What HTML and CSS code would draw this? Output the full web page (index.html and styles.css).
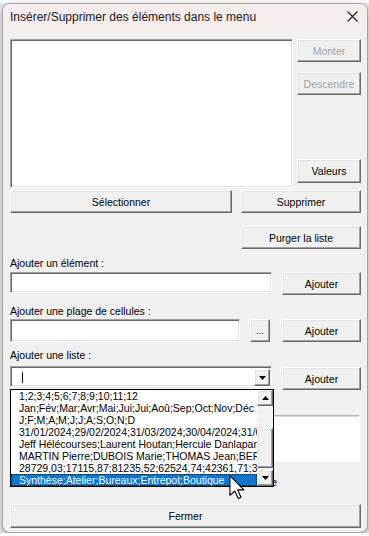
FILE: index.html
```html
<!DOCTYPE html>
<html lang="fr">
<head>
    <meta charset="UTF-8">
    <meta name="viewport" content="width=device-width, initial-scale=1.0">
    <title>Insérer/Supprimer des éléments dans le menu</title>
    <link rel="stylesheet" href="styles.css">
</head>
<body>
    <div class="window">
        <div class="titlebar">
            <span class="title">Insérer/Supprimer des éléments dans le menu</span>
            <svg class="close" width="11" height="11" viewBox="0 0 11 11">
                <path d="M0.5 0.5 L10.5 10.5 M10.5 0.5 L0.5 10.5" stroke="#1f1f1f" stroke-width="1.1" fill="none"/>
            </svg>
        </div>

        <div class="form">
            <div class="row row-top">
                <div class="sunken listbox"></div>
                <div class="side">
                    <button class="btn btn-side disabled">Monter</button>
                    <button class="btn btn-side btn-down disabled">Descendre</button>
                    <button class="btn btn-side btn-values">Valeurs</button>
                </div>
            </div>

            <div class="row row-select">
                <button class="btn btn-select">Sélectionner</button>
                <button class="btn btn-wide">Supprimer</button>
            </div>

            <div class="row row-purge">
                <button class="btn btn-wide">Purger la liste</button>
            </div>

            <div class="lbl lbl-elem">Ajouter un élément :</div>
            <div class="row">
                <div class="sunken tb-elem"></div>
                <button class="btn btn-add">Ajouter</button>
            </div>

            <div class="lbl lbl-range">Ajouter une plage de cellules :</div>
            <div class="row">
                <div class="sunken tb-range"></div>
                <button class="btn btn-dots">...</button>
                <button class="btn btn-add">Ajouter</button>
            </div>

            <div class="lbl lbl-list">Ajouter une liste :</div>
            <div class="row row-combo">
                <div class="sunken combo">
                    <span class="combo-text"><span class="caret"></span></span>
                    <span class="btn combo-btn">
                        <svg width="7" height="4" viewBox="0 0 7 4"><path d="M0 0 H7 L3.5 4 Z" fill="#000"/></svg>
                    </span>

                    <!-- open drop-down of the combo -->
                    <div class="dropdown">
                        <ul class="items">
                            <li>1;2;3;4;5;6;7;8;9;10;11;12</li>
                            <li>Jan;Fév;Mar;Avr;Mai;Jui;Jui;Aoû;Sep;Oct;Nov;Déc</li>
                            <li>J;F;M;A;M;J;J;A;S;O;N;D</li>
                            <li>31/01/2024;29/02/2024;31/03/2024;30/04/2024;31/05/2024;30/06/2024</li>
                            <li>Jeff Hélécourses;Laurent Houtan;Hercule Danlapante;Sarah Croche</li>
                            <li>MARTIN Pierre;DUBOIS Marie;THOMAS Jean;BERNARD Luc</li>
                            <li>28729,03;17115,87;81235,52;62524,74;42361,71;37378,12</li>
                            <li class="selected">Synthèse;Atelier;Bureaux;Entrepot;Boutique</li>
                        </ul>
                        <div class="vscroll">
                            <span class="btn sb-btn">
                                <svg width="7" height="4" viewBox="0 0 7 4"><path d="M0 4 H7 L3.5 0 Z" fill="#000"/></svg>
                            </span>
                            <div class="sb-track"><span class="btn sb-thumb"></span></div>
                            <span class="btn sb-btn">
                                <svg width="7" height="4" viewBox="0 0 7 4"><path d="M0 0 H7 L3.5 4 Z" fill="#000"/></svg>
                            </span>
                        </div>
                    </div>
                </div>
                <button class="btn btn-add btn-add-list">Ajouter</button>
            </div>

            <div class="sunken preview"></div>
            <div class="lbl lbl-note">Valeurs de la liste sélectionnée</div>

            <button class="btn btn-close">Fermer</button>
        </div>
    </div>

    <!-- mouse pointer over the selected item -->
    <svg class="pointer" width="16" height="24" viewBox="-0.5 -0.5 12.5 19.5">
        <path d="M0 0 V16 L4 12.5 L6.8 18.6 L9 17.6 L6.3 11.6 H11.3 Z" fill="#fff" stroke="#000" stroke-width="0.9" stroke-linejoin="round"/>
    </svg>
</body>
</html>
```

FILE: styles.css
```css
body {
    margin: 0;
    background: linear-gradient(#fbfbfb 0 3px, #e4e7eb 3px);
    font-family: "Liberation Sans", Arial, sans-serif;
    font-size: 10.5px;
    color: #000;
}
.window {
    width: 366px;
    height: 530px;
    margin: 3px 0 0 2px;
    box-sizing: border-box;
    border: 1px solid #a4a4a4;
    border-radius: 8px;
    overflow: hidden;
    background-color: #f0f0f0;
    box-shadow: 0 2px 6px rgba(0,0,0,0.25);
}
.titlebar {
    height: 27px;
    display: flex;
    align-items: center;
    padding: 0 9px 2px 7px;
    box-sizing: border-box;
    background-color: #f6eded;
}
.title {
    font-size: 12px;
    color: #1a1a1a;
}
.close {
    margin-left: auto;
}
.form {
    padding: 8px 6px 0 7px;
}
.row {
    display: flex;
    align-items: flex-start;
}

/* 3D controls */
.btn {
    box-sizing: border-box;
    display: flex;
    align-items: center;
    justify-content: center;
    padding: 0;
    background-color: #f0f0f0;
    border: 1px solid;
    border-color: #fff #696969 #696969 #fff;
    box-shadow: inset -1px -1px #a0a0a0, inset 1px 1px #e3e3e3;
    font: inherit;
    color: #000;
}
.btn.disabled {
    color: #a0a0a0;
}
.sunken {
    box-sizing: border-box;
    background-color: #fff;
    border: 1px solid;
    border-color: #a0a0a0 #fff #fff #a0a0a0;
    box-shadow: inset 1px 1px #696969, inset -1px -1px #e3e3e3;
}

.row-top {
    height: 149px;
}
.listbox {
    width: 283px;
    height: 149px;
}
.side {
    margin-left: auto;
    width: 64px;
    height: 149px;
    display: flex;
    flex-direction: column;
}
.btn-side {
    width: 64px;
    height: 23px;
}
.btn-down {
    margin-top: 10px;
}
.btn-values {
    margin-top: auto;
    margin-bottom: 5px;
    height: 24px;
}
.row-select {
    margin-top: 2px;
}
.btn-select {
    width: 222px;
    height: 23px;
}
.btn-wide {
    margin-left: auto;
    width: 120px;
    height: 23px;
}
.row-purge {
    margin-top: 13px;
}
.lbl {
    height: 13px;
    line-height: 13px;
}
.lbl-elem {
    margin-top: 8px;
}
.lbl-elem + .row {
    margin-top: 2px;
}
.tb-elem {
    width: 262px;
    height: 21px;
}
.btn-add {
    margin-left: auto;
    width: 79px;
    height: 23px;
}
.lbl-range {
    margin-top: 10px;
}
.lbl-range + .row {
    margin-top: 1px;
}
.tb-range {
    width: 230px;
    height: 23px;
}
.btn-dots {
    margin-left: 10px;
    width: 20px;
    height: 23px;
    align-items: flex-end;
    padding-bottom: 5px;
    font-size: 9px;
}
.lbl-list {
    margin-top: 7px;
}
.row-combo {
    margin-top: 4px;
    height: 24px;
}
.combo {
    position: relative;
    width: 262px;
    height: 21px;
    display: flex;
    padding: 2px 1px 1px 2px;
}
.combo-text {
    flex: 1;
    display: flex;
    align-items: center;
    padding-left: 9px;
}
.caret {
    width: 1px;
    height: 11px;
    background-color: #000;
}
.combo-btn {
    width: 16px;
    height: 17px;
}
.btn-add-list {
    margin-top: 1px;
}

/* drop-down list, drawn over the controls below */
.dropdown {
    position: absolute;
    top: 22px;
    left: -1px;
    width: 264px;
    height: 98px;
    box-sizing: border-box;
    border: 1px solid #000;
    background-color: #fff;
    display: flex;
    z-index: 2;
}
.items {
    flex: 1;
    min-width: 0;
    list-style: none;
    margin: 0;
    padding: 0;
    overflow: hidden;
}
.items li {
    height: 12px;
    line-height: 12px;
    padding-left: 8px;
    white-space: nowrap;
    overflow: hidden;
}
.items li.selected {
    background-color: #0078d7;
    color: #fff;
    outline: 1px dotted #1a1a1a;
    outline-offset: -1px;
}
.vscroll {
    width: 16px;
    display: flex;
    flex-direction: column;
}
.sb-btn {
    height: 16px;
}
.sb-track {
    flex: 1;
    padding-top: 22px;
    background: repeating-conic-gradient(#fff 0 25%, #e6e6e6 0 50%) 0 0 / 2px 2px;
}
.sb-thumb {
    height: 40px;
}

.preview {
    margin-top: 25px;
    width: 350px;
    height: 47px;
    border-color: #b4b4b4 #fff #fff #b4b4b4;
    box-shadow: inset 1px 1px #d8d8d8;
}
.lbl-note {
    margin-top: 14px;
    width: 267px;
    text-align: right;
    white-space: nowrap;
}
.btn-close {
    margin-top: 15px;
    width: 351px;
    height: 24px;
}
.pointer {
    position: absolute;
    left: 229px;
    top: 475px;
    z-index: 3;
}
```
